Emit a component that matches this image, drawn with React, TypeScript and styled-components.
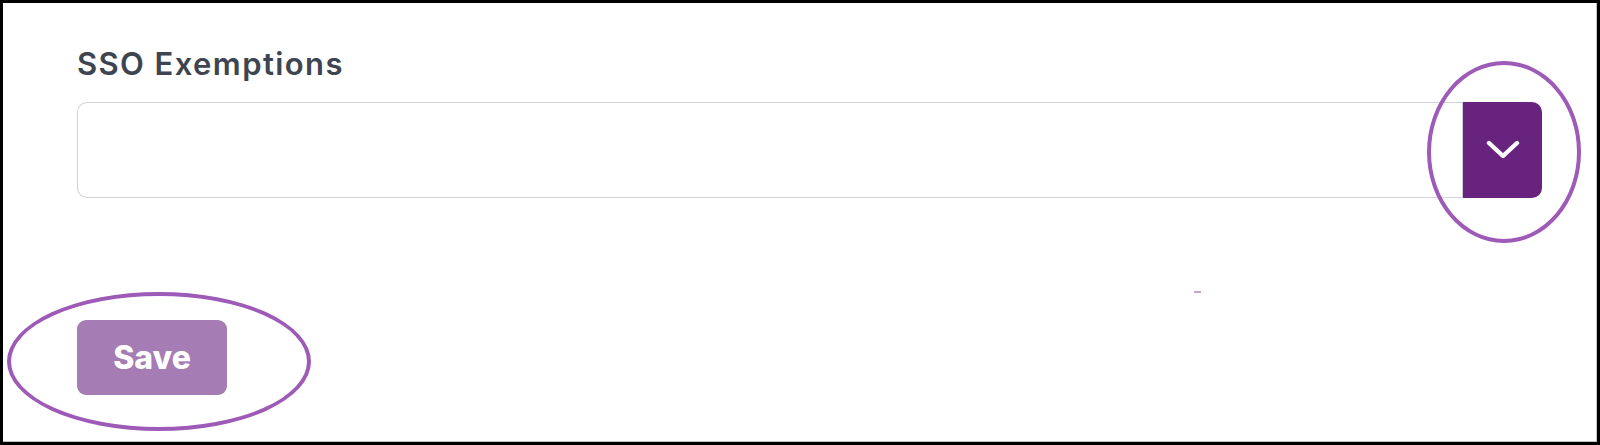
import React from "react";
import styled, { createGlobalStyle } from "styled-components";

const GlobalStyle = createGlobalStyle`
  html, body {
    margin: 0;
    padding: 0;
    background: #ffffff;
  }
  * { box-sizing: border-box; }
`;

const Frame = styled.div`
  position: relative;
  width: 1600px;
  height: 445px;
  border: 3px solid #000000;
  box-shadow: inset -1px -1px 0 #c4c4c4;
  background: #ffffff;
  font-family: Inter, "Noto Sans", sans-serif;
  display: flex;
  flex-direction: column;
  padding: 43px 55px 0 74px;
`;

const Label = styled.h2`
  margin: 0 0 20px 0;
  font-size: 31px;
  line-height: 36px;
  font-weight: 600;
  color: #3e4550;
  letter-spacing: 1.4px;
`;

const SelectRow = styled.div`
  display: flex;
  height: 96px;
`;

const Field = styled.div`
  flex: 1;
  border: 1px solid #d0d4da;
  border-right: none;
  border-radius: 10px 0 0 10px;
  background: #ffffff;
  box-shadow: inset -1px 0 0 #c9ced5;
`;

const ToggleButton = styled.button`
  width: 79px;
  border: none;
  border-radius: 0 10px 10px 0;
  background: #68237f;
  display: flex;
  align-items: center;
  justify-content: center;
  padding: 0;
  cursor: pointer;
`;

const Footer = styled.div`
  margin-top: 122px;
  display: flex;
`;

const SaveButton = styled.button`
  width: 150px;
  height: 75px;
  border: none;
  border-radius: 9px;
  background: #a57cb3;
  color: #ffffff;
  font-family: Inter, "Noto Sans", sans-serif;
  font-size: 32px;
  font-weight: 800;
  display: flex;
  align-items: center;
  justify-content: center;
  padding: 0;
  cursor: pointer;
`;

const Ring = styled.span<{ $x: number; $y: number; $w: number; $h: number }>`
  position: absolute;
  left: ${(p) => p.$x}px;
  top: ${(p) => p.$y}px;
  width: ${(p) => p.$w}px;
  height: ${(p) => p.$h}px;
  border: 4px solid #9e5ab7;
  border-radius: 50%;
  pointer-events: none;
`;

const Speck = styled.span`
  position: absolute;
  left: 1191px;
  top: 288px;
  width: 7px;
  height: 2px;
  background: #c9a3d8;
  pointer-events: none;
`;

const Chevron = () => (
  <svg width="34" height="22" viewBox="0 0 34 22" fill="none">
    <polyline
      points="3,4 17,17 31,4"
      stroke="#ffffff"
      strokeWidth="4.4"
      strokeLinecap="round"
      strokeLinejoin="round"
    />
  </svg>
);

export default function App() {
  return (
    <>
      <GlobalStyle />
      <Frame>
        <Label>SSO Exemptions</Label>
        <SelectRow>
          <Field />
          <ToggleButton aria-label="Open">
            <Chevron />
          </ToggleButton>
        </SelectRow>
        <Footer>
          <SaveButton>Save</SaveButton>
        </Footer>
        <Ring $x={1424} $y={58} $w={154} $h={182} />
        <Ring $x={4} $y={289} $w={304} $h={139} />
        <Speck />
      </Frame>
    </>
  );
}
